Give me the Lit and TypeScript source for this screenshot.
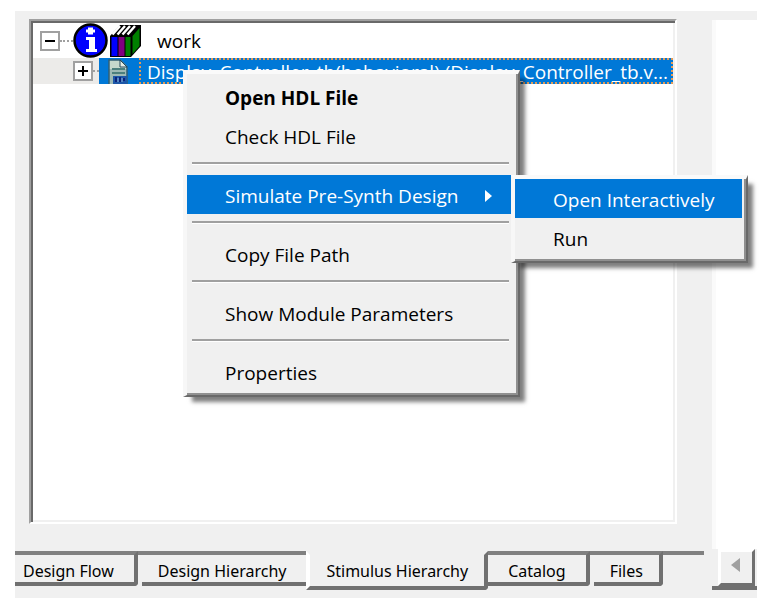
import { LitElement, html, css, svg, nothing } from "lit";
import { customElement, property, state } from "lit/decorators.js";

interface MenuEntry {
  label: string;
  bold?: boolean;
  submenu?: MenuEntry[];
}

const MENU: (MenuEntry | null)[] = [
  { label: "Open HDL File", bold: true },
  { label: "Check HDL File" },
  null,
  {
    label: "Simulate Pre-Synth Design",
    submenu: [{ label: "Open Interactively" }, { label: "Run" }],
  },
  null,
  { label: "Copy File Path" },
  null,
  { label: "Show Module Parameters" },
  null,
  { label: "Properties" },
];

const TABS = ["Design Flow", "Design Hierarchy", "Stimulus Hierarchy", "Catalog", "Files"];

const infoIcon = html`<svg width="35" height="35" viewBox="0 0 35 35" aria-hidden="true">
  <circle cx="17.5" cy="17.5" r="16" fill="#0000fe" stroke="#000" stroke-width="2.5" />
  <path fill="#fff" d="M15 4.500h5v2h2v3h-2v2h-5v-2h-2v-3h2zM13 14h9v12h2v3h-11v-3h3v-9h-3z" />
</svg>`;

const booksIcon = html`<svg width="31" height="35" viewBox="0 0 31 35" aria-hidden="true">
  <path d="M0 13L10 2h21v21L21 34H0z" fill="#000" />
  <path d="M1.500 14h6v19h-6z" fill="#0000fe" />
  <path d="M8.500 14h6v19h-6z" fill="#800080" />
  <path d="M15.500 14h5v19h-5z" fill="#008000" />
  <path d="M22.500 13L29.500 5v18l-7 8z" fill="#008000" />
  <path d="M2.500 11.500L10 3M7.500 11.500L15 3M12.500 11.500L20 3M17.500 11.500L25 3" stroke="#fff" stroke-width="2.500" />
</svg>`;

const fileIcon = html`<svg width="22" height="26" viewBox="0 0 22 26" aria-hidden="true">
  <path d="M1 2h12l6 6v18H1z" fill="#9db9b5" />
  <path d="M1 2h12v6h6v3H1z" fill="#c6d8cc" />
  <path d="M1 26V2h11l7 7v17" fill="none" stroke="#315f75" stroke-width="1.500" />
  <path d="M12 2v7h7z" fill="#e6eee5" stroke="#24495c" />
  <path d="M4 11h13M4 15h13" stroke="#4c7f7d" stroke-width="2" />
  <path d="M5 18h14v8H5z" fill="#1d57a8" />
  <path d="M8 19v5M12 19v5M16 20v3" stroke="#0b237c" stroke-width="2" />
  <path d="M10 20v4M14 20v4" stroke="#8fb6dc" />
</svg>`;

@customElement("tree-toggle")
export class TreeToggle extends LitElement {
  @property({ type: Boolean }) open = false;

  static styles = css`
    :host {
      display: block;
      flex: none;
    }
    .box {
      display: block;
      box-sizing: border-box;
      width: 20px;
      height: 20px;
      padding: 0;
      border: 2px solid #a0a0a0;
      background: #fff;
    }
    .glyph {
      display: block;
    }
  `;

  render() {
    return html`<button class="box" aria-label=${this.open ? "Collapse" : "Expand"}>
      <svg class="glyph" width="16" height="16" viewBox="0 0 16 16" aria-hidden="true">
        <path d="M3 8h10" stroke="#000" stroke-width="2" />
        ${this.open ? nothing : svg`<path d="M8 3v10" stroke="#000" stroke-width="2" />`}
      </svg>
    </button>`;
  }
}

@customElement("context-menu")
export class ContextMenu extends LitElement {
  static styles = css`
    :host {
      display: block;
    }
    .menu {
      box-sizing: border-box;
      width: 337px;
      padding: 3px 7px 4px 0;
      background: #f0f0f0;
      border: solid;
      border-width: 4px 2px 2px 4px;
      border-color: #fafafa #696969 #696969 #f7f7f7;
      box-shadow:
        inset -2px -2px #909090,
        7px 7px 4px -2px rgba(0, 0, 0, 0.5);
    }
    .item {
      display: flex;
      align-items: center;
      justify-content: space-between;
      box-sizing: border-box;
      width: 100%;
      height: 39px;
      padding: 2px 19px 0 38px;
      border: 0;
      background: none;
      color: #000;
      font: 19px/24px "Open Sans", "Noto Sans", sans-serif;
      text-align: left;
      white-space: nowrap;
    }
    .bold {
      font-weight: 700;
    }
    .chosen {
      background: #0078d7;
      color: #fff;
    }
    .separator {
      box-sizing: border-box;
      height: 3px;
      margin: 7px 2px 10px 5px;
      border: 0;
      border-top: 2px solid #a0a0a0;
      border-bottom: 1px solid #fff;
    }
    .holder {
      position: relative;
    }
    .submenu {
      position: absolute;
      left: 100%;
      top: 0;
      width: 237px;
      padding: 0 4px 4px 0;
    }
  `;

  private entry(e: MenuEntry, chosen: boolean) {
    return html`<button
      role="menuitem"
      class="item ${e.bold ? "bold" : ""} ${chosen ? "chosen" : ""}"
      aria-haspopup=${e.submenu ? "menu" : nothing}
    >
      <span>${e.label}</span>
      ${e.submenu
        ? html`<svg width="7" height="12" viewBox="0 0 7 12" aria-hidden="true">
            <path d="M0 0L7 6L0 12z" fill="#fff" />
          </svg>`
        : nothing}
    </button>`;
  }

  render() {
    return html`<div class="menu" role="menu">
      ${MENU.map((e) => {
        if (!e) return html`<hr class="separator" />`;
        if (!e.submenu) return this.entry(e, false);
        return html`<div class="holder">
          ${this.entry(e, true)}
          <div class="menu submenu" role="menu">
            ${e.submenu.map((s, i) => this.entry(s, i === 0))}
          </div>
        </div>`;
      })}
    </div>`;
  }
}

@customElement("app-root")
export class AppRoot extends LitElement {
  @state() private tab = "Stimulus Hierarchy";

  static styles = css`
    :host {
      display: flex;
      box-sizing: border-box;
      min-height: 100vh;
      padding: 11px 27px 12px 15px;
      background: #fff;
      color: #000;
      font: 19px/24px "Open Sans", "Noto Sans", sans-serif;
    }
    .pane {
      flex: 1;
      min-width: 0;
      display: flex;
      flex-direction: column;
      background: #f0f0f0;
    }
    .tree {
      flex: 1;
      margin: 8px 35px 27px 14px;
      padding: 2px 0 0 2px;
      border: 2px solid;
      border-color: #a0a0a0 #fff #fff #a0a0a0;
      background: #fff;
      box-shadow:
        inset 2px 2px #696969,
        inset -2px -2px #f0f0f0;
    }
    .row {
      display: flex;
      align-items: center;
      position: relative;
      height: 26px;
      padding-left: 40px;
      background: linear-gradient(#ecebe9, #ecebe9) no-repeat 0 0 / 66px 100%;
    }
    .root {
      height: 35px;
      padding-left: 7px;
      background: none;
    }
    .stem {
      align-self: center;
      width: 6px;
      border-top: 2px dotted #a0a0a0;
    }
    .root .stem {
      width: 13px;
    }
    .books {
      display: flex;
      margin: 0 16px 0 2px;
    }
    .info {
      display: flex;
    }
    .selected {
      flex: 1;
      min-width: 0;
      display: flex;
      height: 26px;
      margin-right: 2px;
      padding-left: 9px;
      gap: 9px;
      background: #0078d7;
      color: #fff;
    }
    .label {
      flex: 1;
      min-width: 0;
      box-sizing: border-box;
      height: 26px;
      padding-left: 6px;
      border: 2px dotted #e39a55;
      overflow: hidden;
      white-space: nowrap;
    }
    .popup {
      position: absolute;
      left: 150px;
      top: 12px;
      z-index: 1;
    }
    .tabs {
      display: flex;
      height: 47px;
      margin-right: 8px;
    }
    .tab {
      box-sizing: border-box;
      height: 35px;
      margin: 0;
      padding: 4px 16px 0;
      border: solid #707070;
      border-width: 4px 4px 4px 0;
      border-top-color: #808080;
      border-radius: 0 0 4px 0;
      background: #f0f0f0;
      color: #000;
      font: 16px/24px "Noto Sans", "Open Sans", sans-serif;
      white-space: nowrap;
    }
    .tab:first-child {
      padding-left: 8px;
      padding-right: 20px;
    }
    .current {
      height: 39px;
      padding: 0 16px;
      border-top-color: #f0f0f0;
      border-left: 4px solid #fff;
    }
    .current + .tab {
      padding-left: 20px;
      padding-right: 20px;
    }
    .before {
      border-right: 0;
      border-radius: 0;
      padding-right: 20px;
    }
    .rule {
      flex: 1;
      height: 4px;
      background: #808080;
    }
    .gap {
      width: 4px;
      height: 4px;
      background: #808080;
    }
    .side {
      flex: none;
      display: flex;
      flex-direction: column;
      width: 45px;
      background: #f0f0f0;
    }
    .canvas {
      flex: 1;
      margin-top: 9px;
      border-left: 4px solid #fafafa;
      background: #fff;
    }
    .scroll {
      display: flex;
      padding: 0 2px 0 6px;
      border-bottom: 4px solid #707070;
      margin-bottom: 8px;
    }
    .arrow {
      display: flex;
      align-items: center;
      justify-content: center;
      box-sizing: border-box;
      width: 37px;
      height: 37px;
      padding: 0 3px 6px 0;
      border: 3px solid;
      border-color: #fff #707070 #707070 #fff;
      background: #f0f0f0;
    }
  `;

  render() {
    const at = TABS.indexOf(this.tab);
    return html`
      <section class="pane">
        <div class="tree" role="tree">
          <div class="row root" role="treeitem" aria-expanded="true">
            <tree-toggle open></tree-toggle>
            <span class="stem"></span>
            <span class="info">${infoIcon}</span>
            <span class="books">${booksIcon}</span>
            <span>work</span>
          </div>
          <div class="row" role="treeitem" aria-selected="true">
            <tree-toggle></tree-toggle>
            <span class="stem"></span>
            <div class="selected">
              ${fileIcon}
              <span class="label">Display_Controller_tb(behavioral) (Display_Controller_tb.v...</span>
            </div>
            <context-menu class="popup"></context-menu>
          </div>
        </div>
        <div class="tabs" role="tablist">
          ${TABS.map(
            (t, i) => html`<button
                role="tab"
                aria-selected=${i === at}
                class="tab ${i === at ? "current" : ""} ${i === at - 1 ? "before" : ""}"
                @click=${() => (this.tab = t)}
              >
                ${t}</button
              >${i === at || i === at - 1 ? nothing : html`<span class="gap"></span>`}`
          )}
          <span class="rule"></span>
        </div>
      </section>
      <aside class="side">
        <div class="canvas"></div>
        <div class="scroll">
          <button class="arrow" aria-label="Scroll left">
            <svg width="9" height="14" viewBox="0 0 9 14" aria-hidden="true">
              <path d="M9 0L0 7L9 14z" fill="#a0a0a0" />
            </svg>
          </button>
        </div>
      </aside>
    `;
  }
}
